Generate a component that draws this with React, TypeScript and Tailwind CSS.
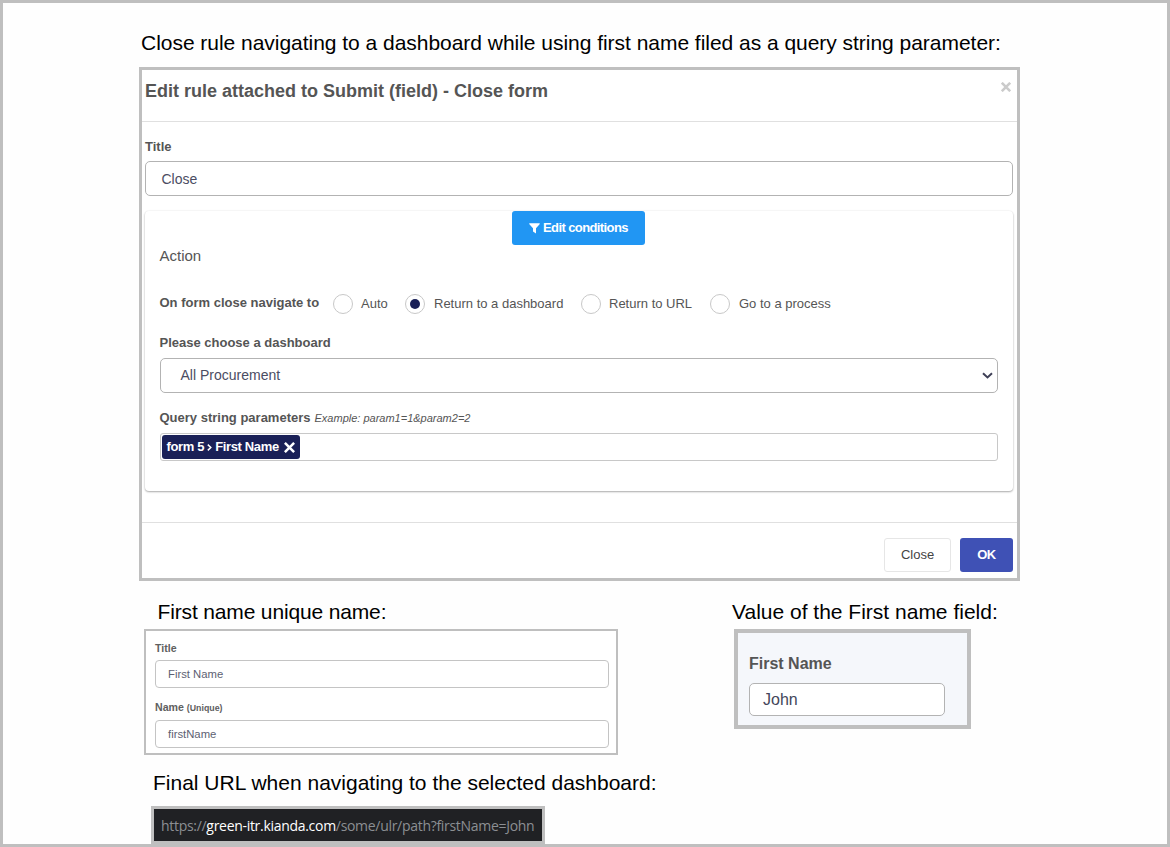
import React from "react";

function Caption({ children, className }: { children: React.ReactNode; className: string }) {
  return (
    <h2 className={`whitespace-nowrap text-[21px] leading-6 text-black ${className}`}>{children}</h2>
  );
}

function Radio({ label, checked, className, text }: { label: string; checked?: boolean; className: string; text: string }) {
  return (
    <label className={`flex h-5 items-center text-[13px] text-[#555] ${className}`}>
      <span className="flex size-5 shrink-0 items-center justify-center rounded-full border border-[#c8c8c8]">
        {checked && <span className="size-[10px] rounded-full bg-[#1a2057]" />}
      </span>
      <span className={`whitespace-nowrap ${text}`}>{label}</span>
    </label>
  );
}

function RuleDialog() {
  return (
    <section className="ml-[136px] flex h-[514px] w-[881px] flex-col border-3 border-[#bfbfbf] bg-white text-[13px] text-[#555]">
      <header className="flex h-[52px] justify-between border-b border-[#e0e0e0] pl-[3px] pr-[6px]">
        <h1 className="whitespace-nowrap pt-[9px] text-[18px] font-bold leading-6">
          Edit rule attached to Submit (field) - Close form
        </h1>
        <svg className="mt-[12px] size-[10px]" viewBox="0 0 10 10" stroke="#cbcbcb" strokeWidth="2.6">
          <path d="M0.8 0.8 9.2 9.2M9.2 0.8 0.8 9.2" />
        </svg>
      </header>
      <div className="h-[400px] pl-[3px] pr-[4px] pt-[16px]">
        <div className="h-[23px] font-bold leading-[18px]">Title</div>
        <div className="flex h-[35px] items-center rounded-[5px] border border-[#b3b3b3] pl-[15.5px] pt-px text-[14px] text-[#4b4d63]">Close</div>
        <div className="mt-[15px] h-[280px] rounded-[4px] px-[15px] shadow-[0_1px_2px_rgba(0,0,0,0.32),0_0_2px_rgba(0,0,0,0.08)]">
          <div className="flex justify-center">
            <button className="mr-px flex h-[34px] w-[133px] items-center gap-[3px] whitespace-nowrap rounded-[3px] bg-[#2196f3] pl-[17px] text-[13px] font-bold tracking-[-0.6px] text-white">
              <svg className="size-[11px]" viewBox="0 0 11 11" fill="currentColor">
                <path d="M0.4 0.3H10.6Q11 .8 10.6 1.3L7 5.2V10.6L4 8.6V5.2L.4 1.3Q0 .8 .4 .3Z" />
              </svg>
              <span>Edit conditions</span>
            </button>
          </div>
          <div className="-ml-[0.5px] mt-[1px] h-[20px] text-[15px] leading-5">Action</div>
          <div className="mt-[28px] flex h-5">
            <span className="-ml-[0.5px] w-[173.5px] whitespace-nowrap font-bold leading-[18px]">On form close navigate to</span>
            <Radio label="Auto" className="w-[72px]" text="ml-[8px]" />
            <Radio label="Return to a dashboard" checked className="w-[176px]" text="ml-[9px]" />
            <Radio label="Return to URL" className="w-[129px]" text="ml-[8px]" />
            <Radio label="Go to a process" className="" text="ml-[9px]" />
          </div>
          <div className="-ml-[0.5px] mt-[20px] h-[24px] font-bold leading-[18px]">Please choose a dashboard</div>
          <div className="flex h-[35px] items-center justify-between rounded-[5px] border border-[#b3b3b3] pl-[19.5px] pr-[4px] text-[14px] text-[#4b4d63]">
            <span>All Procurement</span>
            <svg className="h-[7px] w-[11px]" viewBox="0 0 11 7" fill="none" stroke="#3f4057" strokeWidth="2">
              <path d="M1 1.2 5.5 5.4 10 1.2" />
            </svg>
          </div>
          <div className="-ml-[0.5px] mt-[16px] flex h-[24px] whitespace-nowrap leading-[18px]">
            <span className="font-bold">Query string parameters</span>
            <span className="ml-[4px] text-[11px] italic">Example: param1=1&amp;param2=2</span>
          </div>
          <div className="flex h-[28px] items-center rounded-[3px] border border-[#c8c8c8] pl-px">
            <span className="flex h-[24px] w-[138px] items-center whitespace-nowrap rounded-[3px] bg-[#1a2057] pl-[4.5px] font-bold tracking-[-0.35px] text-white">
              form 5
              <svg className="mx-[3px] mt-px h-[7px] w-[5px]" viewBox="0 0 5 7" fill="none" stroke="currentColor" strokeWidth="1.5">
                <path d="M.8.6 3.8 3.5.8 6.4" />
              </svg>
              First Name
              <svg className="ml-[5px] size-[11px]" viewBox="0 0 10 10" stroke="currentColor" strokeWidth="2.3">
                <path d="M.8.8 9.2 9.2M9.2.8.8 9.2" />
              </svg>
            </span>
          </div>
        </div>
      </div>
      <footer className="flex grow justify-end gap-[9px] border-t border-[#e0e0e0] pr-[4px] pt-[15px]">
        <button className="h-[34px] w-[67px] rounded-[3px] border border-[#e6e6e6] text-[13px] text-[#444]">Close</button>
        <button className="h-[34px] w-[53px] rounded-[3px] bg-[#3f51b5] text-[13px] font-bold tracking-[-0.4px] text-white">OK</button>
      </footer>
    </section>
  );
}

function SmallInput({ value }: { value: string }) {
  return (
    <div className="flex h-[28px] w-[454px] items-center rounded-[4px] border border-[#c4c4c4] pl-[12px] text-[11.3px] text-[#5d5f72]">{value}</div>
  );
}

export default function App() {
  return (
    <main className="h-[847px] w-[1170px] overflow-hidden border-3 border-[#bfbfbf] bg-[#fefefe] font-['Liberation_Sans',Arial,sans-serif]">
      <Caption className="ml-[138px] h-[64px] pt-[28px] tracking-[-0.03px]">
        Close rule navigating to a dashboard while using first name filed as a query string parameter:
      </Caption>
      <RuleDialog />
      <div className="flex h-[174px]">
        <section className="w-[587px] pl-[141px] pt-[19px]">
          <Caption className="pl-[13.5px] tracking-[-0.15px]">First name unique name:</Caption>
          <div className="mt-[5px] h-[126px] w-[474px] border-2 border-[#bfbfbf] bg-white pl-[9px] pt-[10px] text-[10.6px] font-bold leading-[14px] text-[#606060]">
            <div className="h-[19px]">Title</div>
            <div className="font-normal"><SmallInput value="First Name" /></div>
            <div className="mt-[12px] h-[20px]">Name <span className="text-[8.8px]">(Unique)</span></div>
            <div className="font-normal"><SmallInput value="firstName" /></div>
          </div>
        </section>
        <section className="pl-[142px] pt-[19px]">
          <Caption>Value of the First name field:</Caption>
          <div className="ml-[2px] mt-[5px] h-[100px] w-[237px] border-4 border-[#bfbfbf] bg-[#f5f7fb] pl-[11px] pt-[20px]">
            <div className="h-[30px] pt-px text-[16px] font-bold leading-5 text-[#555]">First Name</div>
            <div className="flex h-[33px] w-[196px] items-center rounded-[5px] border border-[#b3b3b3] bg-white pl-[13px] text-[16px] text-[#44465a]">John</div>
          </div>
        </section>
      </div>
      <Caption className="ml-[150px] mt-[16px] h-[35px]">Final URL when navigating to the selected dashboard:</Caption>
      <div className="ml-[148px] flex h-[38px] w-[394px] items-center whitespace-nowrap border-3 border-[#bfbfbf] bg-[#202124] pl-[7px] pt-px font-['Open_Sans','Noto_Sans',sans-serif] text-[14px] tracking-[-0.3px] text-[#8c8f93]">
        https://<span className="text-white">green-itr.kianda.com</span>/some/ulr/path?firstName=John
      </div>
    </main>
  );
}
